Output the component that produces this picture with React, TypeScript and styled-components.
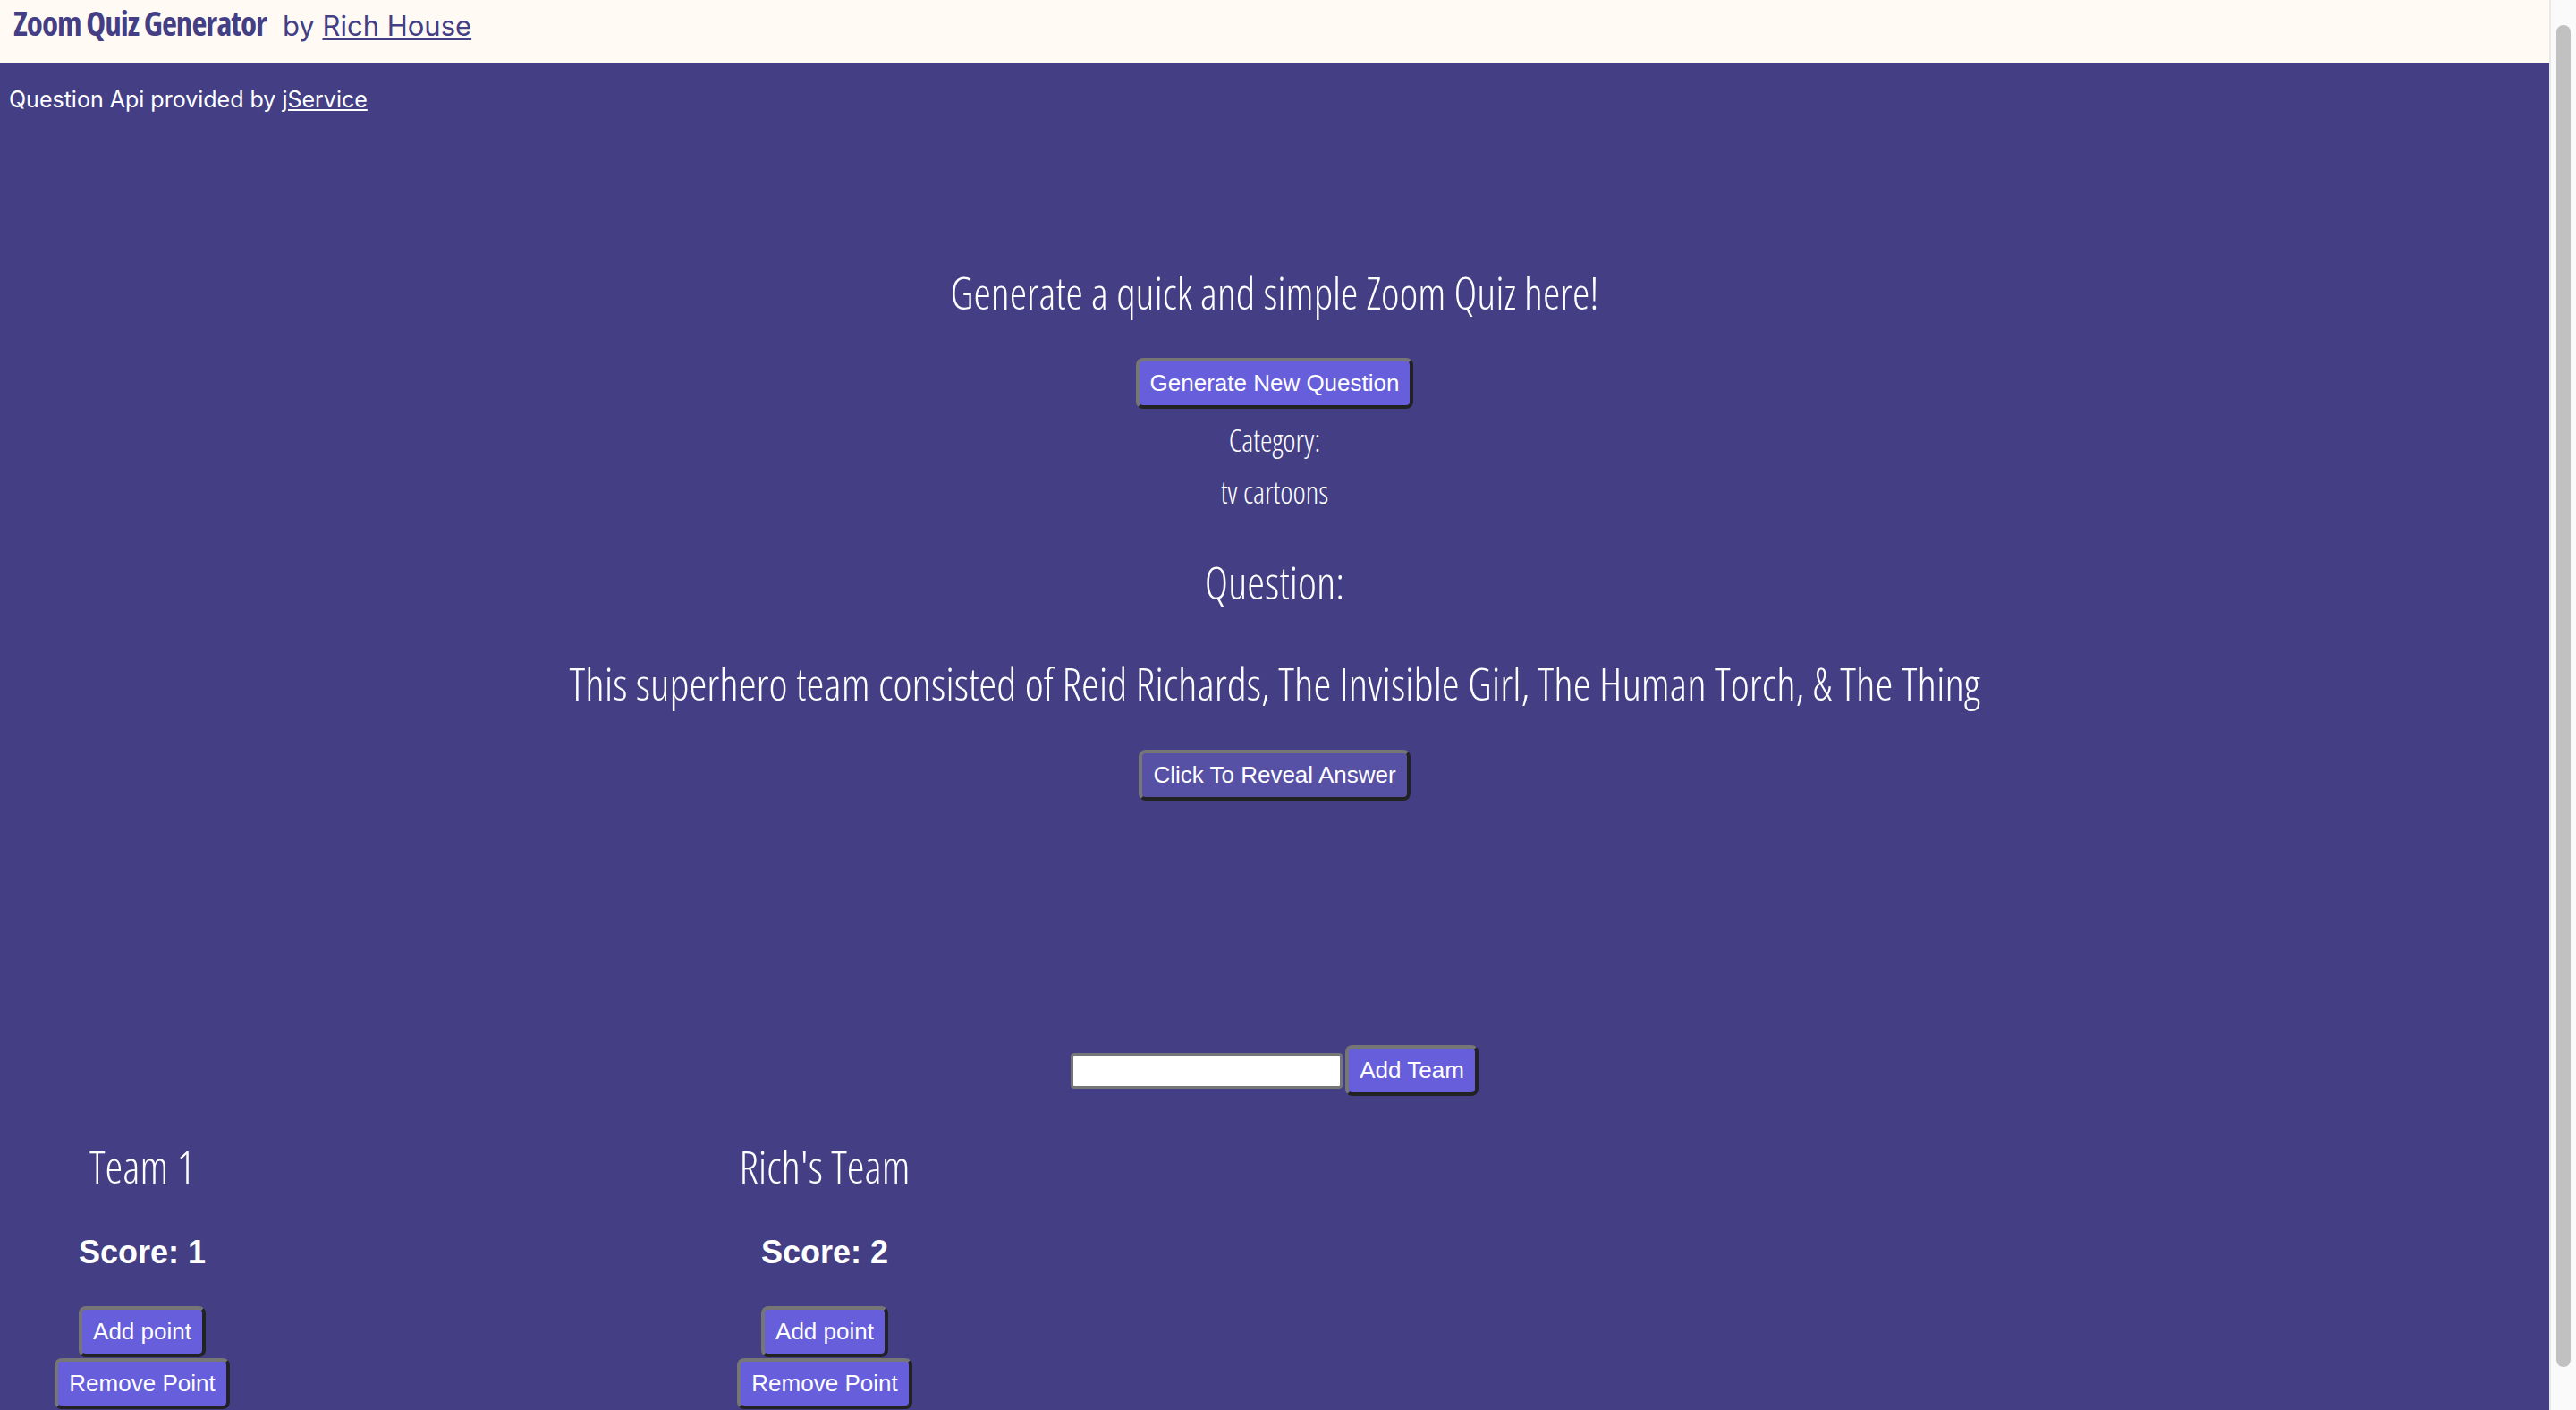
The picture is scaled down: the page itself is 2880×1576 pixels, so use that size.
import React from "react";
import styled, { createGlobalStyle } from "styled-components";

const GlobalStyle = createGlobalStyle`
  html, body { margin: 0; padding: 0; overflow: hidden; }
  body {
    background: #443f85;
    color: #ffffff;
    font-family: Inter, "Noto Sans", sans-serif;
  }
`;

const COND = `"Open Sans", "Noto Sans", sans-serif`;

const Page = styled.div`
  display: grid;
  grid-template-columns: 1fr 30px;
  height: 100vh;
  overflow: hidden;
`;

const Content = styled.div`
  overflow: hidden;
  min-width: 0;
`;

const ScrollTrack = styled.div`
  background: #fafafa;
  border-left: 2px solid #e9e9e9;
  box-sizing: border-box;
  padding: 28px 6px 0 6px;
`;

const Thumb = styled.div`
  height: 1500px;
  border-radius: 8px;
  background: #c1c1c1;
`;

const Header = styled.header`
  height: 70px;
  background: #fffaf3;
  display: flex;
  align-items: baseline;
  padding-left: 15px;
  box-sizing: border-box;
  color: #443f85;
`;

const Title = styled.h1`
  margin: 0;
  font-family: ${COND};
  font-stretch: 75%;
  font-weight: 700;
  font-size: 37px;
  line-height: 51px;
  letter-spacing: -1px;
`;

const Byline = styled.span`
  margin-left: 18px;
  font-family: Inter, sans-serif;
  font-size: 31px;
  a { color: #443f85; }
`;

const Credit = styled.p`
  margin: 26px 0 0 10px;
  font-size: 25px;
  line-height: 30px;
  a { color: #ffffff; }
`;

const Main = styled.main`
  display: flex;
  flex-direction: column;
  align-items: center;
  text-align: center;
`;

const Heading = styled.h2<{ $mt: number; $size?: number }>`
  margin: ${(p) => p.$mt}px 0 0;
  font-family: ${COND};
  font-stretch: 75%;
  font-weight: 300;
  font-size: ${(p) => p.$size ?? 51}px;
  line-height: 60px;
`;

const Label = styled.p<{ $mt: number }>`
  margin: ${(p) => p.$mt}px 0 0;
  font-family: ${COND};
  font-stretch: 75%;
  font-weight: 300;
  font-size: 34px;
  line-height: 40px;
`;

const Button = styled.button<{ $muted?: boolean; $mt?: number }>`
  margin-top: ${(p) => p.$mt ?? 0}px;
  font-family: "Liberation Sans", Arial, sans-serif;
  font-size: 26px;
  line-height: 31px;
  color: #ffffff;
  background: ${(p) => (p.$muted ? "#5751a6" : "#665edb")};
  border: 4px solid;
  border-color: #767676 #222222 #222222 #767676;
  border-radius: 8px;
  padding: 9px 12px;
  cursor: pointer;
`;

const AddRow = styled.div`
  margin-top: 273px;
  display: flex;
  align-items: center;
  gap: 3px;
`;

const TeamInput = styled.input`
  width: 304px;
  height: 40px;
  box-sizing: border-box;
  border: 3px solid #767676;
  border-radius: 4px;
  background: #ffffff;
`;

const Teams = styled.section`
  display: flex;
  gap: 445px;
  margin-top: 49px;
  padding-bottom: 40px;
`;

const TeamCard = styled.div`
  width: 318px;
  display: flex;
  flex-direction: column;
  align-items: center;
`;

const TeamName = styled.h2`
  margin: 0;
  font-family: ${COND};
  font-stretch: 75%;
  font-weight: 300;
  font-size: 50px;
  line-height: 60px;
`;

const Score = styled.h3`
  margin: 41px 0 0;
  font-family: "Liberation Sans", Arial, sans-serif;
  font-weight: 700;
  font-size: 36px;
  line-height: 50px;
`;

const ButtonStack = styled.div`
  margin-top: 35px;
  display: flex;
  flex-direction: column;
  align-items: center;
  gap: 1px;
`;

const teams = [
  { name: "Team 1", score: 1 },
  { name: "Rich's Team", score: 2 },
];

const question =
  "This superhero team consisted of Reid Richards, The Invisible Girl, The Human Torch, & The Thing";

export default function App() {
  return (
    <Page>
      <GlobalStyle />
      <Content>
        <Header>
          <Title>Zoom Quiz Generator</Title>
          <Byline>
            by <a href="#">Rich House</a>
          </Byline>
        </Header>
        <Credit>
          Question Api provided by <a href="#">jService</a>
        </Credit>
        <Main>
          <Heading $mt={171} $size={49}>
            Generate a quick and simple Zoom Quiz here!
          </Heading>
          <Button $mt={43}>Generate New Question</Button>
          <Label $mt={15}>Category:</Label>
          <Label $mt={18}>tv cartoons</Label>
          <Heading $mt={51} $size={50}>
            Question:
          </Heading>
          <Heading $mt={53} $size={50.3}>
            {question}
          </Heading>
          <Button $mt={44} $muted>
            Click To Reveal Answer
          </Button>
          <AddRow>
            <TeamInput type="text" />
            <Button>Add Team</Button>
          </AddRow>
        </Main>
        <Teams>
          {teams.map((t) => (
            <TeamCard key={t.name}>
              <TeamName>{t.name}</TeamName>
              <Score>Score: {t.score}</Score>
              <ButtonStack>
                <Button>Add point</Button>
                <Button>Remove Point</Button>
              </ButtonStack>
            </TeamCard>
          ))}
        </Teams>
      </Content>
      <ScrollTrack>
        <Thumb />
      </ScrollTrack>
    </Page>
  );
}
